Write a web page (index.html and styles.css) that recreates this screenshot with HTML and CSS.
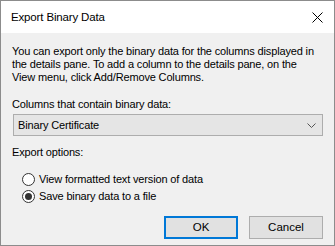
FILE: index.html
```html
<!DOCTYPE html>
<html lang="en">
<head>
    <meta charset="UTF-8">
    <title>Export Binary Data</title>
    <link rel="stylesheet" href="styles.css">
</head>
<body>
    <div class="dialog">
        <div class="titlebar">
            <span class="title">Export Binary Data</span>
            <svg class="close" width="11" height="11" viewBox="0 0 11 11">
                <path d="M0.5 0.5 L10.5 10.5 M10.5 0.5 L0.5 10.5" stroke="#000" stroke-width="1" fill="none"/>
            </svg>
        </div>
        <div class="content">
            <p class="intro">You can export only the binary data for the columns displayed in<br>the details pane. To add a column to the details pane, on the<br>View menu, click Add/Remove Columns.</p>
            <div class="label">Columns that contain binary data:</div>
            <div class="combo">
                <span>Binary Certificate</span>
                <svg width="9" height="5" viewBox="0 0 9 5">
                    <path d="M0.5 0.5 L4.5 4.5 L8.5 0.5" stroke="#555" stroke-width="1" fill="none"/>
                </svg>
            </div>
            <div class="label options-label">Export options:</div>
            <div class="radio-row">
                <span class="radio"></span>
                <span>View formatted text version of data</span>
            </div>
            <div class="radio-row">
                <span class="radio checked"></span>
                <span>Save binary data to a file</span>
            </div>
            <div class="buttons">
                <button class="btn default">OK</button>
                <button class="btn">Cancel</button>
            </div>
        </div>
    </div>
</body>
</html>
```

FILE: styles.css
```css
body {
    margin: 0;
    font-family: "Liberation Sans", Arial, sans-serif;
    font-size: 11px;
    letter-spacing: -0.15px;
    color: #000;
}
.dialog {
    width: 335px;
    height: 246px;
    box-sizing: border-box;
    border: 1px solid #8c8c8c;
    display: flex;
    flex-direction: column;
}
.titlebar {
    height: 32px;
    background: #fff;
    display: flex;
    align-items: center;
    justify-content: space-between;
    padding: 0 11px 0 10px;
}
.title {
    font-size: 11.5px;
}
.content {
    flex: 1;
    background: #f0f0f0;
    padding: 12px 11px 0 11px;
    line-height: 13px;
}
.intro {
    margin: 0;
    white-space: nowrap;
}
.label {
    margin-top: 14px;
}
.combo {
    margin-top: 3px;
    margin-left: 1px;
    height: 22px;
    box-sizing: border-box;
    border: 1px solid #adadad;
    background: #e5e5e5;
    display: flex;
    align-items: center;
    justify-content: space-between;
    padding: 0 6px 0 4px;
}
.options-label {
    margin-top: 10px;
}
.radio-row {
    display: flex;
    align-items: center;
    height: 17px;
    padding-left: 10px;
}
.options-label + .radio-row {
    margin-top: 12px;
}
.radio {
    width: 11px;
    height: 11px;
    border: 1px solid #333;
    border-radius: 50%;
    background: #fff;
    margin-right: 4px;
    position: relative;
}
.radio.checked::after {
    content: "";
    position: absolute;
    left: 2px;
    top: 2px;
    width: 7px;
    height: 7px;
    border-radius: 50%;
    background: #333;
}
.buttons {
    display: flex;
    justify-content: flex-end;
    gap: 11px;
    margin-top: 11px;
}
.btn {
    width: 74px;
    height: 23px;
    font: inherit;
    font-size: 11.5px;
    background: #e1e1e1;
    border: 1px solid #adadad;
    padding: 0;
}
.btn.default {
    border: 2px solid #0078d7;
}
```
